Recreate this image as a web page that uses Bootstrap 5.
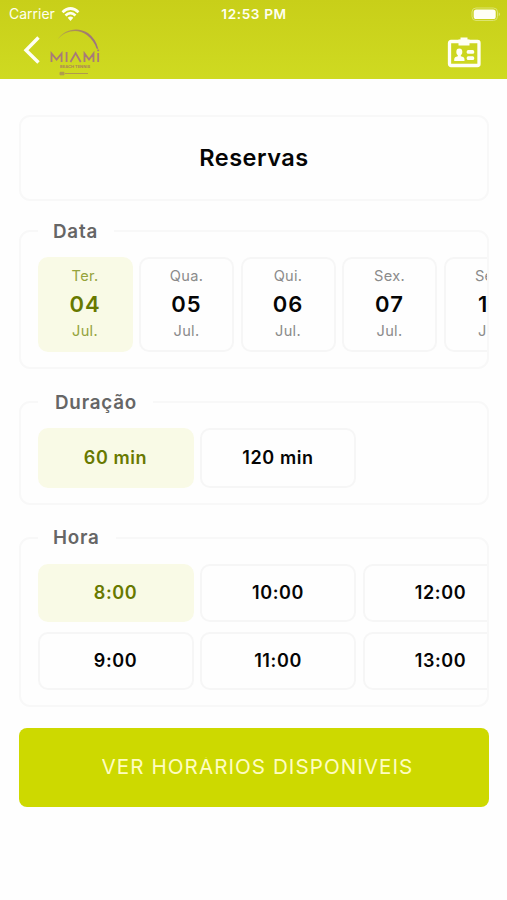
<!DOCTYPE html>
<html lang="pt-BR">
<head>
<meta charset="utf-8">
<meta name="viewport" content="width=device-width, initial-scale=1">
<title>Reservas</title>
<link href="https://cdn.jsdelivr.net/npm/bootstrap@5.3.0/dist/css/bootstrap.min.css" rel="stylesheet">
<style>
body{font-family:Inter,"Open Sans",sans-serif;background:#fefefe;color:#050505;height:900px;overflow:hidden}
main{padding:36px 18px 0 19px}
.app-top{height:79px;background:linear-gradient(#c8cf19,#cfda21);color:#fffff0}
.status{height:28px;padding:0 6px 0 9px;font-size:14px;line-height:28px}
.status>div{flex:1 1 0}
.clock{font-weight:600;letter-spacing:.6px;font-size:13.6px;margin-left:-2px}
.tools{height:51px;padding:0 26px 0 23px}
.brand{margin-left:9px}
.title-box{height:86px;border:2px solid #f8f8f8;border-radius:11px;font-size:23.5px;font-weight:600;letter-spacing:.5px}
.group{border:2px solid #f8f8f8;border-radius:11px;padding:25px 0 0 16.5px;position:relative}
.legend-tag{position:absolute;left:17px;top:-15px;height:28px;line-height:28px;padding:0 16px 0 15px;background:#fefefe;color:#666;font-size:18.8px;font-weight:600;letter-spacing:.8px}
.g-data .legend-tag,.g-dur .legend-tag{top:-14px}
.legend-tag.dur{padding-left:17px}
.track{overflow:hidden;gap:6.5px}
.opt{flex:none;border:2px solid #f6f6f6;border-radius:10px;background:#fefefe}
.opt.on{background:#f9fae6;border-color:#f9fae6;color:#687900}
.day{width:95px;height:95px;padding-top:7px;text-align:center}
.day span{display:block;font-size:14.6px;line-height:21px;color:#8b8b8b;letter-spacing:.3px}
.day b{display:block;font-size:22px;line-height:34px;font-weight:600;letter-spacing:1px}
.day.on span{color:#95a33c}
.pill{width:156px;height:58px;font-size:18px;font-weight:600;letter-spacing:.6px;padding-bottom:2px}
.g-data{margin-top:29px;height:139px}
.g-dur{margin-top:32px;height:104px}
.g-dur .pill{height:60px}
.g-hora{margin-top:32px;height:170px}
.slots{grid-template-columns:repeat(3,156px);gap:10px 6.5px}
.cta{margin-top:20.5px;height:79px;border-radius:8px;background:#cdd900;color:#fffdc0;border:0;font-size:20.6px;letter-spacing:1.05px;font-weight:400;padding:0 0 0 7px}
.cta:hover{background:#cdd900}
.cta span{clip-path:inset(6px 0 0 0)}
</style>
</head>
<body>
<header class="app-top">
  <div class="status d-flex align-items-center">
    <div class="d-flex align-items-center"><span>Carrier</span>
      <svg width="18" height="15" class="ms-2" viewBox="1.500 0 18 15" fill="none" stroke="#fffff0" stroke-width="2.700" overflow="visible"><path d="M1 5.200Q9-2.200 17 5.200M4 8.400Q9 3.800 14 8.400"/><path d="M6.200 10.700Q9 8.100 11.800 10.700L9 13.900Z" fill="#fffff0" stroke="none"/></svg>
    </div>
    <span class="clock">12:53 PM</span>
    <div class="d-flex justify-content-end">
      <svg width="30" height="15" viewBox="0 0 30 15"><rect x="1" y="1" width="25.500" height="12.500" rx="4" fill="none" stroke="#dce46f"/><rect x="2.700" y="2.500" width="22" height="9.500" rx="2.600" fill="#fffff5"/><path d="M27.800 5.200q2 2 0 4" fill="#e6eb91"/></svg>
    </div>
  </div>
  <div class="tools d-flex align-items-start">
    <svg width="18" height="44" viewBox="0 0 18 44"><path d="M15.500 9.500L3 22.200L15.500 34.500" fill="none" stroke="#fffff5" stroke-width="3.400"/></svg>
    <svg class="brand" width="52" height="49" viewBox="0 0 52 49">
      <defs><linearGradient id="arc"><stop offset="0" stop-color="#b5ab45"/><stop offset=".5" stop-color="#a88660"/><stop offset="1" stop-color="#9a7186"/></linearGradient></defs>
      <path d="M7.500 11.500C14 1 28-1.500 38 5Q46 11 48.300 21L46.500 20.500Q44 12.500 36.800 7C28 .5 16 2 7.500 11.500Z" fill="url(#arc)"/>
      <g fill="none" stroke="#a87a78" stroke-width="1.800"><path d="M1.500 34V25.500L6.600 31.500L11.600 25.500V34M16.600 24V34M20.500 34L25.600 25L30.700 34M34.500 34V25.500L39 31.500L43.500 25.500V34M48.200 25V34M48.200 21.500V23.300"/></g>
      <text x="10" y="39.500" font-family="Inter,sans-serif" font-size="4" font-weight="700" textLength="30" fill="#ab845a">BEACH TENNIS</text>
      <path d="M10 44.300h4v2.500h-4zM15 45.500H38" fill="#b09a4d" stroke="#b09a4d" stroke-width="1"/>
    </svg>
    <svg class="ms-auto mt-2" width="34" height="33" viewBox="0 0 34 33"><rect x="2.500" y="5.500" width="29.500" height="24" rx="1.500" fill="none" stroke="#fffff5" stroke-width="3.300"/><path d="M11.500 3.500H13.500V1.500H20.500V3.500H22.500V9.500H11.500Z" fill="#fffff5"/><g fill="#fffff5"><ellipse cx="12.300" cy="16" rx="3" ry="3.400"/><path d="M10.800 18h3v2.300q3.700.6 3.700 3.200v1.500H7.200v-1.500q0-2.600 3.600-3.200z"/><rect x="19.700" y="14" width="7.500" height="3.700" rx="1.500"/><rect x="19.700" y="20.200" width="7.500" height="3.700" rx="1.500"/></g></svg>
  </div>
</header>
<main class="d-flex flex-column">
  <div class="title-box d-flex align-items-center justify-content-center"><span>Reservas</span></div>
  <section class="group g-data"><div class="legend-tag">Data</div>
    <div class="track d-flex">
      <div class="opt day on"><span>Ter.</span><b>04</b><span>Jul.</span></div>
      <div class="opt day"><span>Qua.</span><b>05</b><span>Jul.</span></div>
      <div class="opt day"><span>Qui.</span><b>06</b><span>Jul.</span></div>
      <div class="opt day"><span>Sex.</span><b>07</b><span>Jul.</span></div>
      <div class="opt day"><span>Seg.</span><b>10</b><span>Jul.</span></div>
    </div>
  </section>
  <section class="group g-dur"><div class="legend-tag dur">Duração</div>
    <div class="track d-flex">
      <div class="opt pill on d-flex align-items-center justify-content-center">60 min</div>
      <div class="opt pill d-flex align-items-center justify-content-center">120 min</div>
    </div>
  </section>
  <section class="group g-hora"><div class="legend-tag">Hora</div>
    <div class="track slots d-grid">
      <div class="opt pill on d-flex align-items-center justify-content-center">8:00</div>
      <div class="opt pill d-flex align-items-center justify-content-center">10:00</div>
      <div class="opt pill d-flex align-items-center justify-content-center">12:00</div>
      <div class="opt pill d-flex align-items-center justify-content-center">9:00</div>
      <div class="opt pill d-flex align-items-center justify-content-center">11:00</div>
      <div class="opt pill d-flex align-items-center justify-content-center">13:00</div>
    </div>
  </section>
  <button class="btn cta w-100"><span class="d-inline-block">VER HORÁRIOS DISPONÍVEIS</span></button>
</main>
<script src="https://cdn.jsdelivr.net/npm/bootstrap@5.3.0/dist/js/bootstrap.bundle.min.js"></script>
</body>
</html>
